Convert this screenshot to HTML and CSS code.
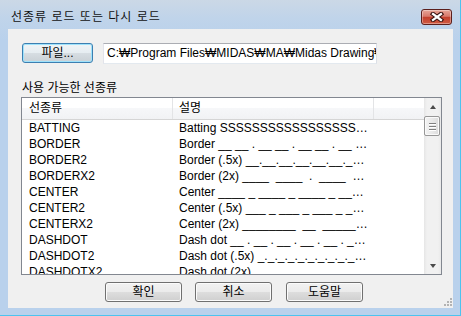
FILE: index.html
```html
<!DOCTYPE html>
<html lang="ko">
<head>
    <meta charset="UTF-8">
    <title>선종류 로드 또는 다시 로드</title>
    <link rel="stylesheet" href="styles.css">
</head>
<body>
    <div class="window">
        <div class="titlebar">
            <span class="title">선종류 로드 또는 다시 로드</span>
            <button class="close" type="button" aria-label="닫기">
                <svg width="14" height="10" viewBox="0 0 14 10">
                    <path d="M3 2 L11 8 M11 2 L3 8" stroke="#3a1412" stroke-width="4.4" stroke-linecap="square" fill="none"/>
                    <path d="M3 2 L11 8 M11 2 L3 8" stroke="#fff" stroke-width="2.2" stroke-linecap="square" fill="none"/>
                </svg>
            </button>
        </div>

        <div class="client">
            <div class="file-row">
                <button class="btn btn-default btn-file" type="button">파일...</button>
                <div class="path">C:₩Program Files₩MIDAS₩MA₩Midas Drawing₩Support₩acadiso.lin</div>
            </div>

            <div class="label">사용 가능한 선종류</div>

            <div class="list">
                <div class="list-main">
                    <div class="list-head">
                        <div class="col1">선종류</div>
                        <div class="col2">설명</div>
                        <div class="col3"></div>
                    </div>
                    <div class="rows">
                        <div class="row"><span class="col1">BATTING</span><span class="col2">Batting SSSSSSSSSSSSSSSSSSSSSSSSSSSSSSSSSSSSSSSSSS</span></div>
                        <div class="row"><span class="col1">BORDER</span><span class="col2">Border __ __ . __ __ . __ __ . __ __ . __ __ .</span></div>
                        <div class="row"><span class="col1">BORDER2</span><span class="col2">Border (.5x) __.__.__.__.__.__.__.__.__.__.__.</span></div>
                        <div class="row"><span class="col1">BORDERX2</span><span class="col2">Border (2x) ____  ____  .  ____  ____  .  ___</span></div>
                        <div class="row"><span class="col1">CENTER</span><span class="col2">Center ____ _ ____ _ ____ _ ____ _ ____ _ ____</span></div>
                        <div class="row"><span class="col1">CENTER2</span><span class="col2">Center (.5x) ___ _ ___ _ ___ _ ___ _ ___ _ ___</span></div>
                        <div class="row"><span class="col1">CENTERX2</span><span class="col2">Center (2x) ________  __  ________  __  _____</span></div>
                        <div class="row"><span class="col1">DASHDOT</span><span class="col2">Dash dot __ . __ . __ . __ . __ . __ . __ . __</span></div>
                        <div class="row"><span class="col1">DASHDOT2</span><span class="col2">Dash dot (.5x) _._._._._._._._._._._._._._._.</span></div>
                        <div class="row"><span class="col1">DASHDOTX2</span><span class="col2">Dash dot (2x) ____  .  ____  .  ____  .  ____</span></div>
                    </div>
                </div>
                <div class="vscroll">
                    <div class="arrow arrow-up"></div>
                    <div class="thumb"><span></span><span></span><span></span></div>
                    <div class="track"></div>
                    <div class="arrow arrow-down"></div>
                </div>
            </div>

            <div class="footer">
                <button class="btn btn-ok" type="button">확인</button>
                <button class="btn btn-cancel" type="button">취소</button>
                <button class="btn btn-help" type="button">도움말</button>
                <div class="grip">
                    <svg width="10" height="10" viewBox="0 0 10 10">
                        <rect x="7" y="1" width="2" height="2" fill="#b3b3b3"/>
                        <rect x="4" y="4" width="2" height="2" fill="#b3b3b3"/>
                        <rect x="7" y="4" width="2" height="2" fill="#b3b3b3"/>
                        <rect x="1" y="7" width="2" height="2" fill="#b3b3b3"/>
                        <rect x="4" y="7" width="2" height="2" fill="#b3b3b3"/>
                        <rect x="7" y="7" width="2" height="2" fill="#b3b3b3"/>
                    </svg>
                </div>
            </div>
        </div>
    </div>
</body>
</html>
```

FILE: styles.css
```css
* {
    box-sizing: border-box;
}
body {
    margin: 0;
    font-family: "Liberation Sans", "Noto Sans CJK KR", sans-serif;
    font-size: 12px;
    color: #000;
}
.window {
    width: 461px;
    height: 316px;
    display: flex;
    flex-direction: column;
    background: linear-gradient(#cbd8e6 0, #c0d4ea 18px, #b9d1ec 40px, #b9d1ec 100%);
    border-right: 1px solid #4cc3ef;
    border-bottom: 1px solid #4cc3ef;
}
.titlebar {
    height: 29px;
    display: flex;
    align-items: flex-start;
    padding: 9px 8px 0 11px;
}
.title {
    line-height: 17px;
    letter-spacing: 1px;
    color: #111;
}
.close {
    margin-left: auto;
    width: 31px;
    height: 16px;
    padding: 0;
    border: 1px solid #5b1f1c;
    border-radius: 3px;
    background: linear-gradient(#e7a597 0, #d8796b 45%, #c3402d 52%, #d05a42 100%);
    box-shadow: inset 0 0 0 1px rgba(255, 255, 255, 0.35);
    display: flex;
    align-items: center;
    justify-content: center;
}
.close svg {
    display: block;
}
.client {
    height: 279px;
    margin: 0 7px 0 8px;
    background: #f0f0f0;
    padding: 14px 0 0 13px;
}
.file-row {
    display: flex;
    height: 21px;
}
.btn {
    width: 77px;
    height: 20px;
    padding: 0;
    border: 1px solid #707070;
    border-radius: 3px;
    background: linear-gradient(#f2f2f2 0, #ebebeb 48%, #dddddd 52%, #cfcfcf 100%);
    box-shadow: inset 0 0 0 1px #fbfbfb;
    font-family: "Liberation Sans", "Noto Sans CJK KR", sans-serif;
    font-size: 12px;
    line-height: 16px;
    color: #000;
}
.btn-default {
    border-color: #3c7fb1;
    box-shadow: inset 0 0 0 1px #9fe2fb;
    background: linear-gradient(#f0f4f6 0, #e6edf1 48%, #d6dde2 52%, #c9d1d6 100%);
}
.btn-file {
    width: 71px;
    margin-left: 1px;
}
.path {
    margin-left: 10px;
    width: 274px;
    height: 21px;
    background: #fff;
    border: 1px solid;
    border-color: #abadb3 #dbdfe6 #e3e9ef #e2e3ea;
    padding: 0 0 0 3px;
    line-height: 19px;
    white-space: nowrap;
    overflow: hidden;
}
.label {
    margin-top: 17px;
    padding-left: 1px;
    line-height: 14px;
    height: 14px;
}
.list {
    margin-top: 2px;
    width: 421px;
    height: 178px;
    border: 1px solid #828790;
    background: #fff;
    display: flex;
}
.list-main {
    width: 402px;
}
.list-head {
    height: 22px;
    display: flex;
    line-height: 21px;
    background: linear-gradient(#ffffff 0, #ffffff 45%, #f6f7f9 50%, #f1f2f4 100%);
    border-bottom: 1px solid #d5d5d5;
}
.list-head .col1,
.list-head .col2 {
    border-right: 1px solid #e3e4e6;
}
.col1 {
    width: 151px;
    flex: none;
    padding-left: 7px;
}
.col2 {
    width: 201px;
    flex: none;
    padding: 0 5px 0 6px;
}
.col3 {
    flex: 1;
}
.rows {
    height: 154px;
    overflow: hidden;
}
.row {
    display: flex;
    height: 16px;
    line-height: 16px;
}
.row .col2 {
    white-space: pre;
    overflow: hidden;
    text-overflow: ellipsis;
}
.vscroll {
    width: 17px;
    display: flex;
    flex-direction: column;
    background: linear-gradient(to right, #e6e6e6, #f1f1f1 3px, #f1f1f1 14px, #e9e9e9);
}
.arrow {
    height: 17px;
    flex: none;
    display: flex;
    align-items: center;
    justify-content: center;
}
.arrow::before {
    content: "";
    width: 0;
    height: 0;
    border-left: 3.5px solid transparent;
    border-right: 3.5px solid transparent;
}
.arrow-up::before {
    border-bottom: 4px solid #4a4a4a;
}
.arrow-down::before {
    border-top: 4px solid #4a4a4a;
}
.thumb {
    height: 20px;
    margin: 1px 1px 0 0;
    border: 1px solid #979797;
    border-radius: 2px;
    background: linear-gradient(to right, #f3f3f3, #e9e9e9 50%, #dcdcdc);
    box-shadow: inset 0 0 0 1px #fafafa;
    display: flex;
    flex-direction: column;
    align-items: center;
    justify-content: center;
    gap: 2px;
}
.thumb span {
    width: 7px;
    height: 1px;
    background: #7f7f7f;
    box-shadow: 0 1px 0 #fff;
}
.track {
    flex: 1;
}
.footer {
    margin-top: 7px;
    height: 26px;
    display: flex;
    align-items: flex-start;
}
.btn-ok {
    margin-left: 84px;
}
.btn-cancel {
    margin-left: 13px;
}
.btn-help {
    margin-left: 14px;
}
.grip {
    margin-left: auto;
    align-self: flex-end;
    width: 10px;
    height: 10px;
    margin-bottom: 1px;
}
.grip svg {
    display: block;
}
```
